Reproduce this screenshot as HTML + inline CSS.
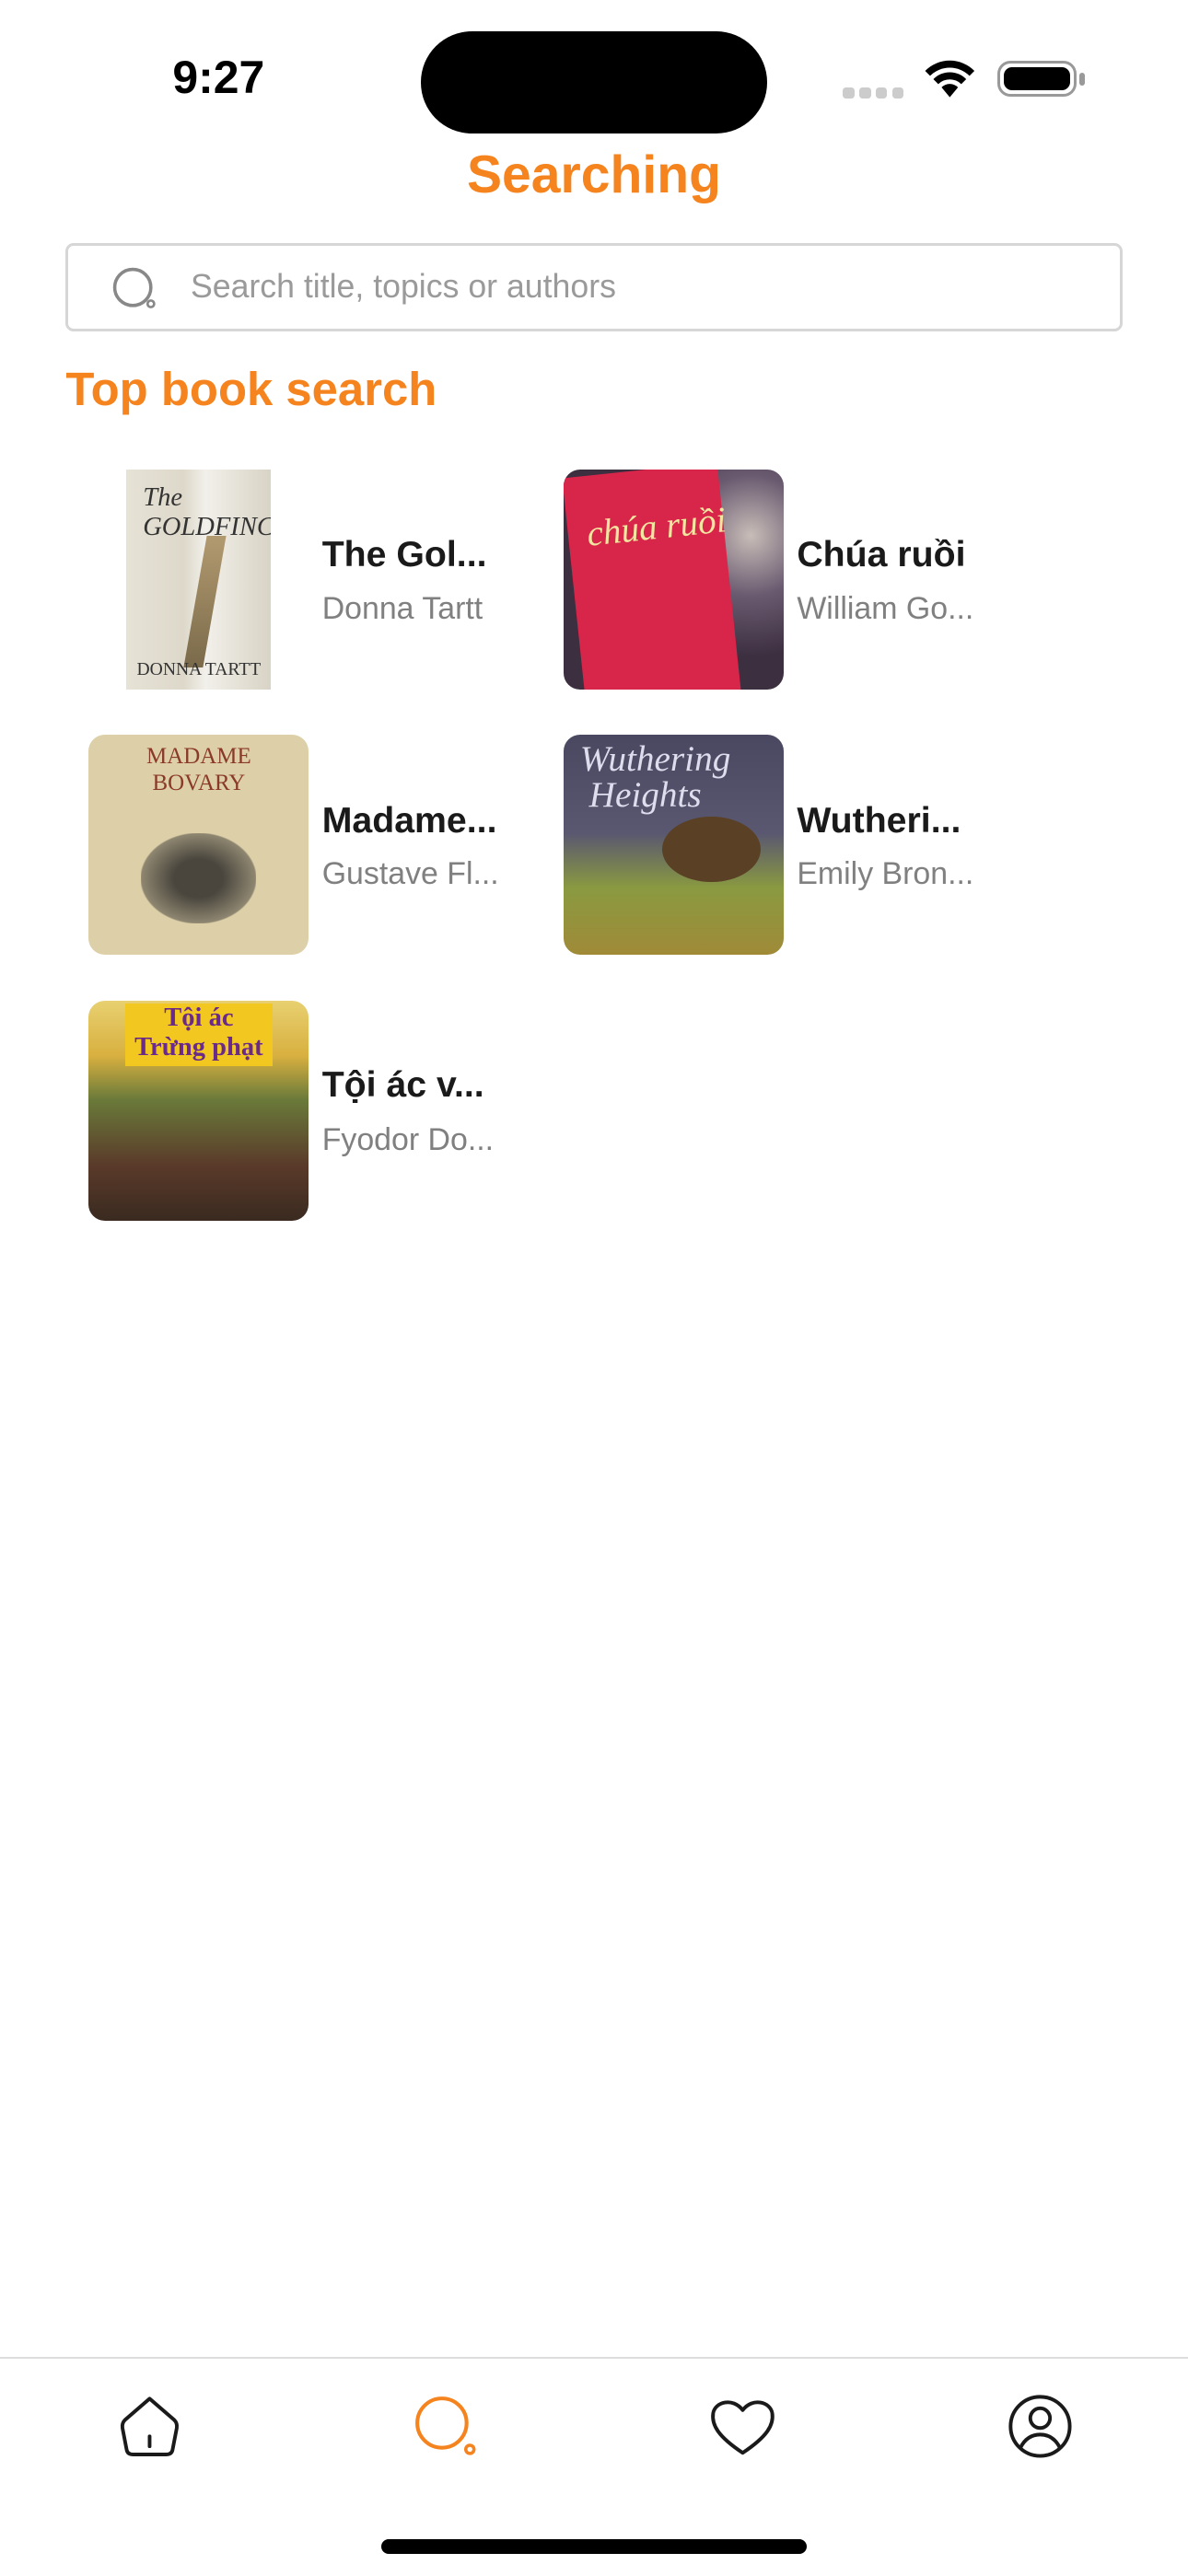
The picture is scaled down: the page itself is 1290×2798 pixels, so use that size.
<!DOCTYPE html>
<html><head><meta charset="utf-8"><style>
html,body{margin:0;padding:0;background:#fff;}
body{width:723px;height:1568px;zoom:1.7842;position:relative;overflow:hidden;font-family:"Liberation Sans","Noto Sans CJK SC",sans-serif;}
.a{position:absolute;}
.t{font-size:22px;color:#1a1a1a;font-weight:bold;}
.s{font-size:19px;color:#808080;}
.cov{position:absolute;width:134px;height:134px;border-radius:10px;overflow:hidden;}
</style></head><body>
<div class="a" style="left:105px;top:31px;font-size:28px;font-weight:bold;color:#000;">9:27</div>
<div class="a" style="left:256px;top:19px;width:211px;height:62px;border-radius:31px;background:#000;"></div>
<div class="a" style="left:513px;top:53px;width:37px;height:7px;display:flex;gap:3px;"><i style="flex:1;background:#ccc;border-radius:2px"></i><i style="flex:1;background:#ccc;border-radius:2px"></i><i style="flex:1;background:#ccc;border-radius:2px"></i><i style="flex:1;background:#ccc;border-radius:2px"></i></div>
<svg class="a" style="left:561px;top:34px" width="34" height="26" viewBox="0 0 34 26"><path d="M2 9a21 21 0 0 1 30 0l-3 3a17 17 0 0 0-24 0z M7 14a14 14 0 0 1 20 0l-3 3a10 10 0 0 0-14 0z M12 19a7 7 0 0 1 10 0l-5 6z" fill="#000"/></svg>
<div class="a" style="left:607px;top:37px;width:48px;height:22px;border:2px solid #999;border-radius:8px;box-sizing:border-box;"><div style="margin:2px;height:14px;background:#000;border-radius:5px"></div></div>
<div class="a" style="left:657px;top:44px;width:3px;height:8px;background:#999;border-radius:2px"></div>
<div class="a" style="left:0;width:723px;top:88px;text-align:center;font-size:32px;font-weight:bold;color:#f5841f;">Searching</div>
<div class="a" style="left:40px;top:148px;width:643px;height:54px;border:2px solid #d6d6d6;border-radius:5px;box-sizing:border-box;"></div>
<svg class="a" style="left:68px;top:162px" width="30" height="28" viewBox="0 0 30 28"><circle cx="13" cy="13" r="11" fill="none" stroke="#888" stroke-width="2"/><circle cx="24" cy="23" r="2" fill="none" stroke="#888" stroke-width="1.5"/></svg>
<div class="a" style="left:116px;top:163px;font-size:20px;color:#9a9a9a;">Search title, topics or authors</div>
<div class="a" style="left:40px;top:220px;font-size:28.5px;font-weight:bold;color:#f5841f;">Top book search</div>

<div class="cov" style="left:77px;top:286px;width:88px;border-radius:0;background:linear-gradient(90deg,#e6e2d6 0,#ddd8ca 40%,#f2f0ea 55%,#d8d3c5 100%);"><div style="position:absolute;left:10px;top:8px;font:italic 16px 'Liberation Serif',serif;color:#333">The<br>GOLDFINCH</div><div style="position:absolute;left:42px;top:40px;width:12px;height:80px;background:linear-gradient(#b29a70,#7a6a4a);transform:skewX(-10deg)"></div><div style="position:absolute;bottom:6px;width:100%;text-align:center;font:11px 'Liberation Serif',serif;color:#333">DONNA TARTT</div></div>
<div class="a t" style="left:196px;top:325px">The Gol...</div>
<div class="a s" style="left:196px;top:360px">Donna Tartt</div>

<div class="cov" style="left:343px;top:286px;background:radial-gradient(circle at 85% 30%,#c8bdb8 0,#6a5a70 25%,#3c2f40 50%) ,#444;"><div style="position:absolute;left:6px;top:0;width:95px;height:140px;background:#d8254a;transform:rotate(-6deg);"></div><div style="position:absolute;left:14px;top:22px;color:#f3e6a0;font:italic 22px 'Liberation Serif',serif;transform:rotate(-6deg)">chúa ruồi</div></div>
<div class="a t" style="left:485px;top:325px">Chúa ruồi</div>
<div class="a s" style="left:485px;top:360px">William Go...</div>

<div class="cov" style="left:54px;top:447px;background:#ddd0a8;"><div style="position:absolute;top:6px;width:100%;text-align:center;font:14px 'Liberation Serif',serif;color:#8a3a2a;line-height:16px">MADAME<br>BOVARY</div><div style="position:absolute;left:32px;top:60px;width:70px;height:55px;background:radial-gradient(ellipse,#4a463e 30%,#8e8670 70%,transparent 72%)"></div></div>
<div class="a t" style="left:196px;top:487px">Madame...</div>
<div class="a s" style="left:196px;top:521px">Gustave Fl...</div>

<div class="cov" style="left:343px;top:447px;background:linear-gradient(#4a4860 0,#5a5870 45%,#8a9a40 70%,#a08a38 100%);"><div style="position:absolute;left:10px;top:4px;color:#dde;font:italic 22px 'Liberation Serif',serif;line-height:22px">Wuthering<br>&nbsp;Heights</div><div style="position:absolute;left:60px;top:50px;width:60px;height:40px;background:#5a4024;border-radius:50%"></div></div>
<div class="a t" style="left:485px;top:487px">Wutheri...</div>
<div class="a s" style="left:485px;top:521px">Emily Bron...</div>

<div class="cov" style="left:54px;top:609px;background:linear-gradient(#e8d070 0,#d8b040 25%,#6a7a3a 45%,#5a3a2a 75%,#3a2a20 100%);"><div style="position:absolute;left:22px;top:2px;width:90px;height:38px;background:#f2c820;color:#6a2a8a;font:bold 16px 'Liberation Serif',serif;text-align:center;line-height:18px">Tội ác<br>Trừng phạt</div></div>
<div class="a t" style="left:196px;top:648px">Tội ác v...</div>
<div class="a s" style="left:196px;top:683px">Fyodor Do...</div>

<div class="a" style="left:0;top:1435px;width:723px;height:1px;background:#ddd"></div>
<svg class="a" style="left:70px;top:1457px" width="42" height="40" viewBox="0 0 42 40"><path d="M21 3 L36 16 Q38 18 37.5 21 L35 34 Q34.5 37 31 37 H11 Q7.5 37 7 34 L4.5 21 Q4 18 6 16 Z" fill="none" stroke="#1a1a1a" stroke-width="2.2" stroke-linejoin="round"/><path d="M21 26v6" stroke="#1a1a1a" stroke-width="2.2" stroke-linecap="round"/></svg>
<svg class="a" style="left:250px;top:1456px" width="44" height="42" viewBox="0 0 44 42"><circle cx="19" cy="19" r="15" fill="none" stroke="#f5841f" stroke-width="2.3"/><circle cx="36" cy="35" r="2.5" fill="none" stroke="#f5841f" stroke-width="2"/></svg>
<svg class="a" style="left:431px;top:1457px" width="42" height="40" viewBox="0 0 42 40"><path d="M21 36 C6 26 2 19 3 12 C4 5 15 2 21 10 C27 2 38 5 39 12 C40 19 36 26 21 36Z" fill="none" stroke="#1a1a1a" stroke-width="2.2" stroke-linejoin="round"/></svg>
<svg class="a" style="left:612px;top:1456px" width="42" height="42" viewBox="0 0 42 42"><circle cx="21" cy="21" r="18" fill="none" stroke="#1a1a1a" stroke-width="2.2"/><circle cx="21" cy="16" r="6" fill="none" stroke="#1a1a1a" stroke-width="2.2"/><path d="M9 34 Q13 26 21 26 Q29 26 33 34" fill="none" stroke="#1a1a1a" stroke-width="2.2"/></svg>
<div class="a" style="left:232px;top:1546px;width:259px;height:9px;border-radius:5px;background:#000"></div>
</body></html>
